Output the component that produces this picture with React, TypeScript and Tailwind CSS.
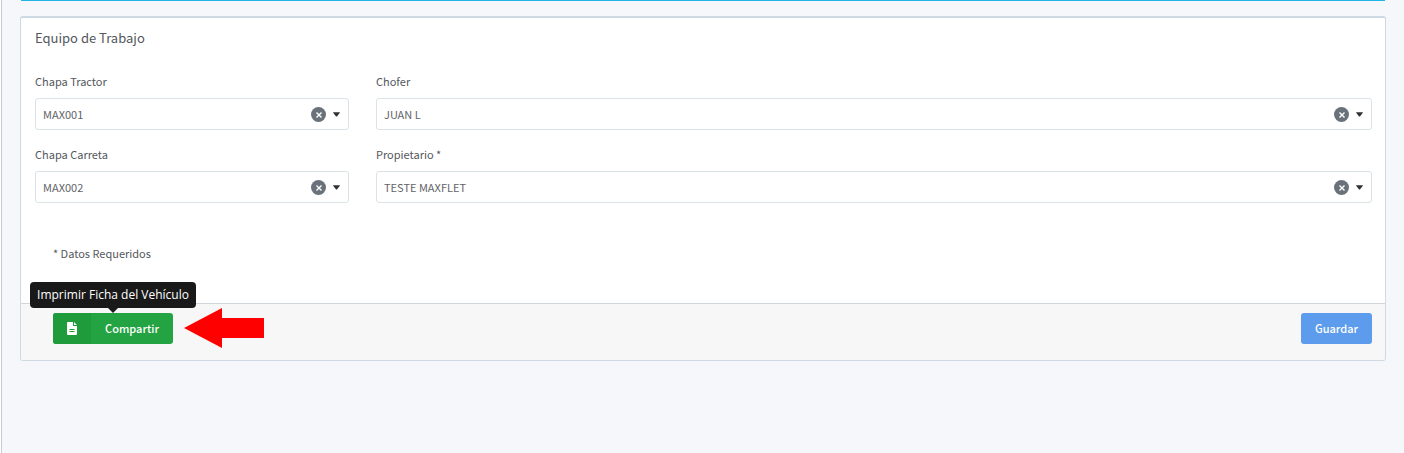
import { useState } from "react";

type Field = {
  id: string;
  label: string;
  value: string;
  wide?: boolean;
};

const fields: Field[] = [
  { id: "tractor", label: "Chapa Tractor", value: "MAX001" },
  { id: "chofer", label: "Chofer", value: "JUAN L", wide: true },
  { id: "carreta", label: "Chapa Carreta", value: "MAX002" },
  { id: "propietario", label: "Propietario *", value: "TESTE MAXFLET", wide: true },
];

function SelectField({ id, label, value, wide }: Field) {
  const [selected, setSelected] = useState(value);

  return (
    <div className={wide ? "col-span-3" : "col-span-1"}>
      <label htmlFor={id} className="mb-2 block leading-[18px]">
        {label}
      </label>
      <div className="relative">
        <select
          id={id}
          value={selected}
          onChange={(e) => setSelected(e.target.value)}
          className="block h-8 w-full appearance-none rounded-[3px] border border-[#dbe3e6] bg-white px-[7px] pr-14 text-[#5f6468] outline-none"
        >
          <option value="" />
          <option value={value}>{value}</option>
        </select>
        {selected && (
          <button
            type="button"
            aria-label={`Limpiar ${label}`}
            onClick={() => setSelected("")}
            className="absolute top-[9px] right-[23px] flex size-[15px] items-center justify-center rounded-full bg-[#69727b]"
          >
            <svg viewBox="0 0 6 6" className="size-[6px]" fill="none" stroke="#fff" strokeWidth="1.4">
              <path d="M.5.5l5 5M5.5.5l-5 5" />
            </svg>
          </button>
        )}
        <svg
          viewBox="0 0 8 5"
          className="pointer-events-none absolute top-[14px] right-[9px] h-[5px] w-[7px]"
          fill="#2f3133"
        >
          <path d="M.4 0h7.2q.4.2.2.6L4.5 4.7q-.5.4-1 0L.2.6Q0 .2.4 0z" />
        </svg>
      </div>
    </div>
  );
}

export default function App() {
  return (
    <main className="ml-px min-h-screen border-l border-[#c9ccd3] bg-[#f5f7fb] pr-[18px] pl-[18px] font-['Noto_Sans_CJK_SC',sans-serif] text-[11px] text-[#53575c]">
      {/* Bottom edge of the previous panel */}
      <div className="mx-px h-px bg-[#1fb5e6]" />

      <section className="mt-[15px] rounded-[3px] border border-t-2 border-[#cddae4] bg-white">
        <h2 className="px-3.5 pt-2.5 text-[13px] leading-5">Equipo de Trabajo</h2>

        <form className="grid grid-cols-4 gap-x-[27px] gap-y-[15px] px-3.5 pt-6 pr-[13px]">
          {fields.map((field) => (
            <SelectField key={field.id} {...field} />
          ))}
        </form>

        <p className="px-8 pt-10 pb-10 leading-5">* Datos Requeridos</p>

        <footer className="flex items-start justify-between rounded-b-[3px] border-t border-[#d0d6da] bg-[#f7f7f7] pt-[9px] pr-[13px] pb-4 pl-8">
          <div className="flex items-start gap-[11px]">
            <div className="relative">
              <button
                type="button"
                aria-describedby="share-tip"
                className="flex h-[31px] w-[120px] overflow-hidden rounded-[3px] bg-[#23a341] font-medium text-white"
              >
                <span className="flex h-full w-[38px] items-center justify-center bg-[#209b3b]">
                  <svg viewBox="0 0 10 13" className="h-[13px] w-[10px]">
                    <path fill="#fff" d="M1 0h5v4h4v8q0 1-1 1H1q-1 0-1-1V1q0-1 1-1zM7 0l3 3H7z" />
                    <path stroke="#209b3b" d="M2.5 7.5h5M2.5 9.5h5" />
                  </svg>
                </span>
                <span className="flex h-full flex-1 items-center justify-center">Compartir</span>
              </button>
              <div
                id="share-tip"
                role="tooltip"
                className="absolute bottom-full left-1/2 mb-[5px] flex h-[26px] w-[166px] -translate-x-1/2 items-center justify-center rounded-[4px] bg-[#191919] font-['Open_Sans',sans-serif] text-[12px] whitespace-nowrap text-white"
              >
                Imprimir Ficha del Vehículo
                <svg viewBox="0 0 10 5" className="absolute top-full h-[5px] w-[10px]" fill="#191919">
                  <path d="M0 0h10L5 5z" />
                </svg>
              </div>
            </div>
            <svg viewBox="0 0 80 40" className="-my-[5px] h-10 w-20" fill="#fe0000">
              <path d="M0 20L38 0v10h42v20H38v10z" />
            </svg>
          </div>

          <button type="submit" className="h-[31px] w-[71px] rounded-[3px] bg-[#5d9cec] font-medium text-white">
            Guardar
          </button>
        </footer>
      </section>
    </main>
  );
}
